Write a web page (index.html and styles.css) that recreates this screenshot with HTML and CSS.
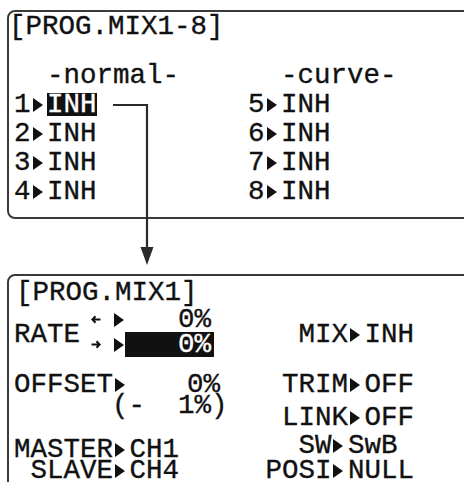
FILE: index.html
```html
<!DOCTYPE html>
<html lang="en">
<head>
<meta charset="utf-8">
<title>PROG.MIX</title>
<link rel="stylesheet" href="styles.css">
</head>
<body>
<div class="page">
  <section class="lcd lcd-top">
    <div class="title">[PROG.MIX1-8]</div>
    <div class="mix-grid">
      <div class="mix-col">
        <div class="line">  -normal-</div>
        <div class="line">1<span class="tri"></span><span class="sel">INH</span></div>
        <div class="line">2<span class="tri"></span>INH</div>
        <div class="line">3<span class="tri"></span>INH</div>
        <div class="line">4<span class="tri"></span>INH</div>
      </div>
      <div class="mix-col">
        <div class="line">  -curve-</div>
        <div class="line">5<span class="tri"></span>INH</div>
        <div class="line">6<span class="tri"></span>INH</div>
        <div class="line">7<span class="tri"></span>INH</div>
        <div class="line">8<span class="tri"></span>INH</div>
      </div>
    </div>
  </section>

  <section class="lcd lcd-bottom">
    <div class="title title-b">[PROG.MIX1]</div>
    <div class="cols">
      <div class="col-left">
        <div class="rate">
          <div class="rate-label">RATE</div>
          <div class="rate-rows">
            <div class="rate-row">
              <svg class="dir" viewBox="0 0 10 9" width="10" height="9"><path d="M9.5 4.5H1.5M4.5 1.2L1.3 4.5L4.5 7.8"/></svg>
              <span class="tri"></span>
              <span class="val">0%</span>
            </div>
            <div class="rate-row">
              <svg class="dir" viewBox="0 0 10 9" width="10" height="9"><path d="M0.5 4.5H8.5M5.5 1.2L8.7 4.5L5.5 7.8"/></svg>
              <span class="tri"></span>
              <span class="val val-sel">0%</span>
            </div>
          </div>
        </div>
        <div class="lrow offset"><span>OFFSET<span class="tri"></span></span><span>0%</span></div>
        <div class="lrow paren">(-  1%)</div>
        <div class="lrow master">MASTER<span class="tri"></span>CH1</div>
        <div class="lrow slave"> SLAVE<span class="tri"></span>CH4</div>
      </div>
      <div class="col-right">
        <div class="rrow r-mix">MIX<span class="tri"></span>INH</div>
        <div class="rrow r-trim">TRIM<span class="tri"></span>OFF</div>
        <div class="rrow r-link">LINK<span class="tri"></span>OFF</div>
        <div class="rrow r-sw">SW<span class="tri"></span>SwB</div>
        <div class="rrow r-posi">POSI<span class="tri"></span>NULL</div>
      </div>
    </div>
  </section>

  <svg class="connector" viewBox="0 0 464 482" width="464" height="482">
    <path class="conn-line" d="M113 105H147V250"/>
    <polygon class="conn-head" points="140.5,247 153.5,247 147,265"/>
  </svg>
</div>
</body>
</html>
```

FILE: styles.css
```css
html, body {
  margin: 0;
  padding: 0;
  background: #ffffff;
  overflow: hidden;
}

.page {
  position: relative;
  width: 464px;
  height: 482px;
  padding: 10px 0 0 7px;
  box-sizing: border-box;
  font-family: "Liberation Mono", "DejaVu Sans Mono", monospace;
  font-size: 27.5px;
  color: #111111;
  -webkit-text-stroke: 0.35px currentColor;
  overflow: hidden;
}

.title,
.line,
.lrow,
.rrow,
.val,
.rate-label {
  white-space: pre;
}

.lcd {
  width: 480px;
  box-sizing: border-box;
  border: 2px solid #3a3a3a;
  border-radius: 8px;
  padding: 0 0 0 5px;
}

.lcd-top {
  height: 209px;
}

.lcd-bottom {
  margin-top: 55px;
  height: 240px;
  padding-top: 2px;
}

.title {
  line-height: 29px;
  margin-left: -5px;
}

.lcd-top .title {
  margin-bottom: 20px;
}

.title-b {
  margin-left: 2px;
}

.mix-grid {
  display: grid;
  grid-template-columns: 234px 1fr;
}

.line {
  line-height: 29px;
}

.tri {
  display: inline-block;
  width: 1ch;
  height: 14px;
  vertical-align: baseline;
}

.tri::before {
  content: "";
  display: block;
  width: 0;
  height: 0;
  margin-left: 2px;
  border-left: 10px solid #111111;
  border-top: 7px solid transparent;
  border-bottom: 7px solid transparent;
}

.sel {
  display: inline-block;
  line-height: 23px;
  background: #111111;
  color: #ffffff;
}

.cols {
  display: flex;
}

.col-left {
  width: 200px;
}

.col-right {
  width: 200px;
  text-align: right;
}

.rate {
  display: flex;
  height: 50px;
}

.rate-label {
  width: 80px;
  line-height: 21px;
  margin-top: 17px;
}

.rate-rows {
  display: flex;
  flex-direction: column;
}

.rate-row {
  display: flex;
  align-items: center;
  height: 25px;
}

.dir {
  display: block;
  margin-left: 5px;
  fill: none;
  stroke: #111111;
  stroke-width: 2;
}

.rate-row .tri {
  width: 11px;
  margin-left: 13px;
}

.rate-row .tri::before {
  margin-left: 0;
}

.val {
  width: 89px;
  line-height: 25px;
  text-align: right;
  padding-right: 3px;
  box-sizing: border-box;
}

.val-sel {
  background: #111111;
  color: #ffffff;
}

.lrow {
  line-height: 21px;
}

.offset {
  display: flex;
  justify-content: space-between;
  width: 206px;
  margin-top: 17px;
}

.paren {
  padding-left: 98px;
}

.master {
  margin-top: 23px;
}

.rrow {
  line-height: 21px;
}

.r-mix {
  margin-top: 17px;
}

.r-trim {
  margin-top: 29px;
}

.r-link {
  margin-top: 12px;
}

.r-sw {
  margin-top: 7px;
  padding-right: 1ch;
}

.r-posi {
  margin-top: 4px;
}

.connector {
  position: absolute;
  left: 0;
  top: 0;
  pointer-events: none;
}

.conn-line {
  fill: none;
  stroke: #2a2a2a;
  stroke-width: 2.2;
}

.conn-head {
  fill: #2a2a2a;
}
```
